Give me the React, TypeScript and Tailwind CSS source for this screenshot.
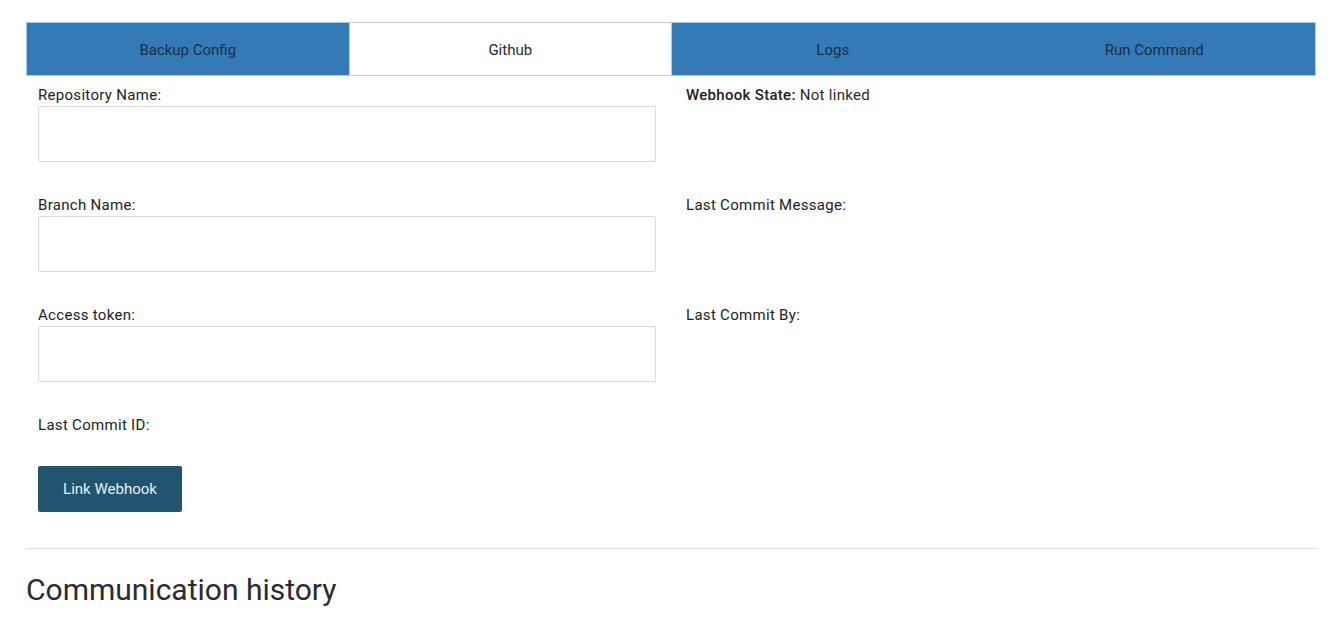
import React from "react";

const tabs = ["Backup Config", "Github", "Logs", "Run Command"];

const labelCls = "text-[15px] leading-[20px] tracking-[0.3px] font-normal text-[#222]";

function Field({ label }: { label: string }) {
  return (
    <div className="h-[110px]">
      <div className={labelCls}>{label}</div>
      <input className="mt-[1px] block h-[56px] w-full border border-[#d9d9d9] rounded-[2px] bg-white outline-none" />
    </div>
  );
}

function Info({ label, value }: { label: string; value?: string }) {
  return (
    <div className={"h-[110px] " + labelCls}>
      <span className={value ? "font-medium" : ""}>{label}</span>
      {value ? <span className="font-normal text-[#2b2b2b]"> {value}</span> : null}
    </div>
  );
}

export default function App() {
  return (
    <div className="min-h-[624px] bg-white pl-[26px] pt-[22px] text-[#2b2b2b]" style={{ fontFamily: "Roboto, 'Noto Sans', sans-serif" }}>
      <div className="w-[1290px]">
        <div className="flex h-[54px] border border-[#a9cbe6] bg-[#337ab7]">
          {tabs.map((t) => (
            <div
              key={t}
              className={
                t === "Github"
                  ? "flex flex-1 items-center justify-center pt-[2px] border border-[#c8c8c8] bg-white text-[15px] text-[#2b2b2b] -my-[1px]"
                  : "flex flex-1 items-center justify-center pt-[2px] text-[15px] text-[#1c2f42]"
              }
            >
              {t}
            </div>
          ))}
        </div>
        <div className="grid grid-cols-2 pt-[9px]">
          <div className="pl-[12px] pr-[15px]">
            <Field label="Repository Name:" />
            <Field label="Branch Name:" />
            <Field label="Access token:" />
            <div className={labelCls}>Last Commit ID:</div>
            <button className="mt-[31px] h-[46px] w-[144px] rounded-[2px] bg-[#23546f] text-[15px] text-[#e3eef5]">
              Link Webhook
            </button>
          </div>
          <div className="pl-[15px]">
            <Info label="Webhook State:" value="Not linked" />
            <Info label="Last Commit Message:" />
            <Info label="Last Commit By:" />
          </div>
        </div>
        <div className="mt-[36px] border-t border-[#dcdcdc]" />
        <h2 className="mt-[23px] text-[30px] leading-[36px] font-normal text-[#2b2b2b]">Communication history</h2>
      </div>
    </div>
  );
}
